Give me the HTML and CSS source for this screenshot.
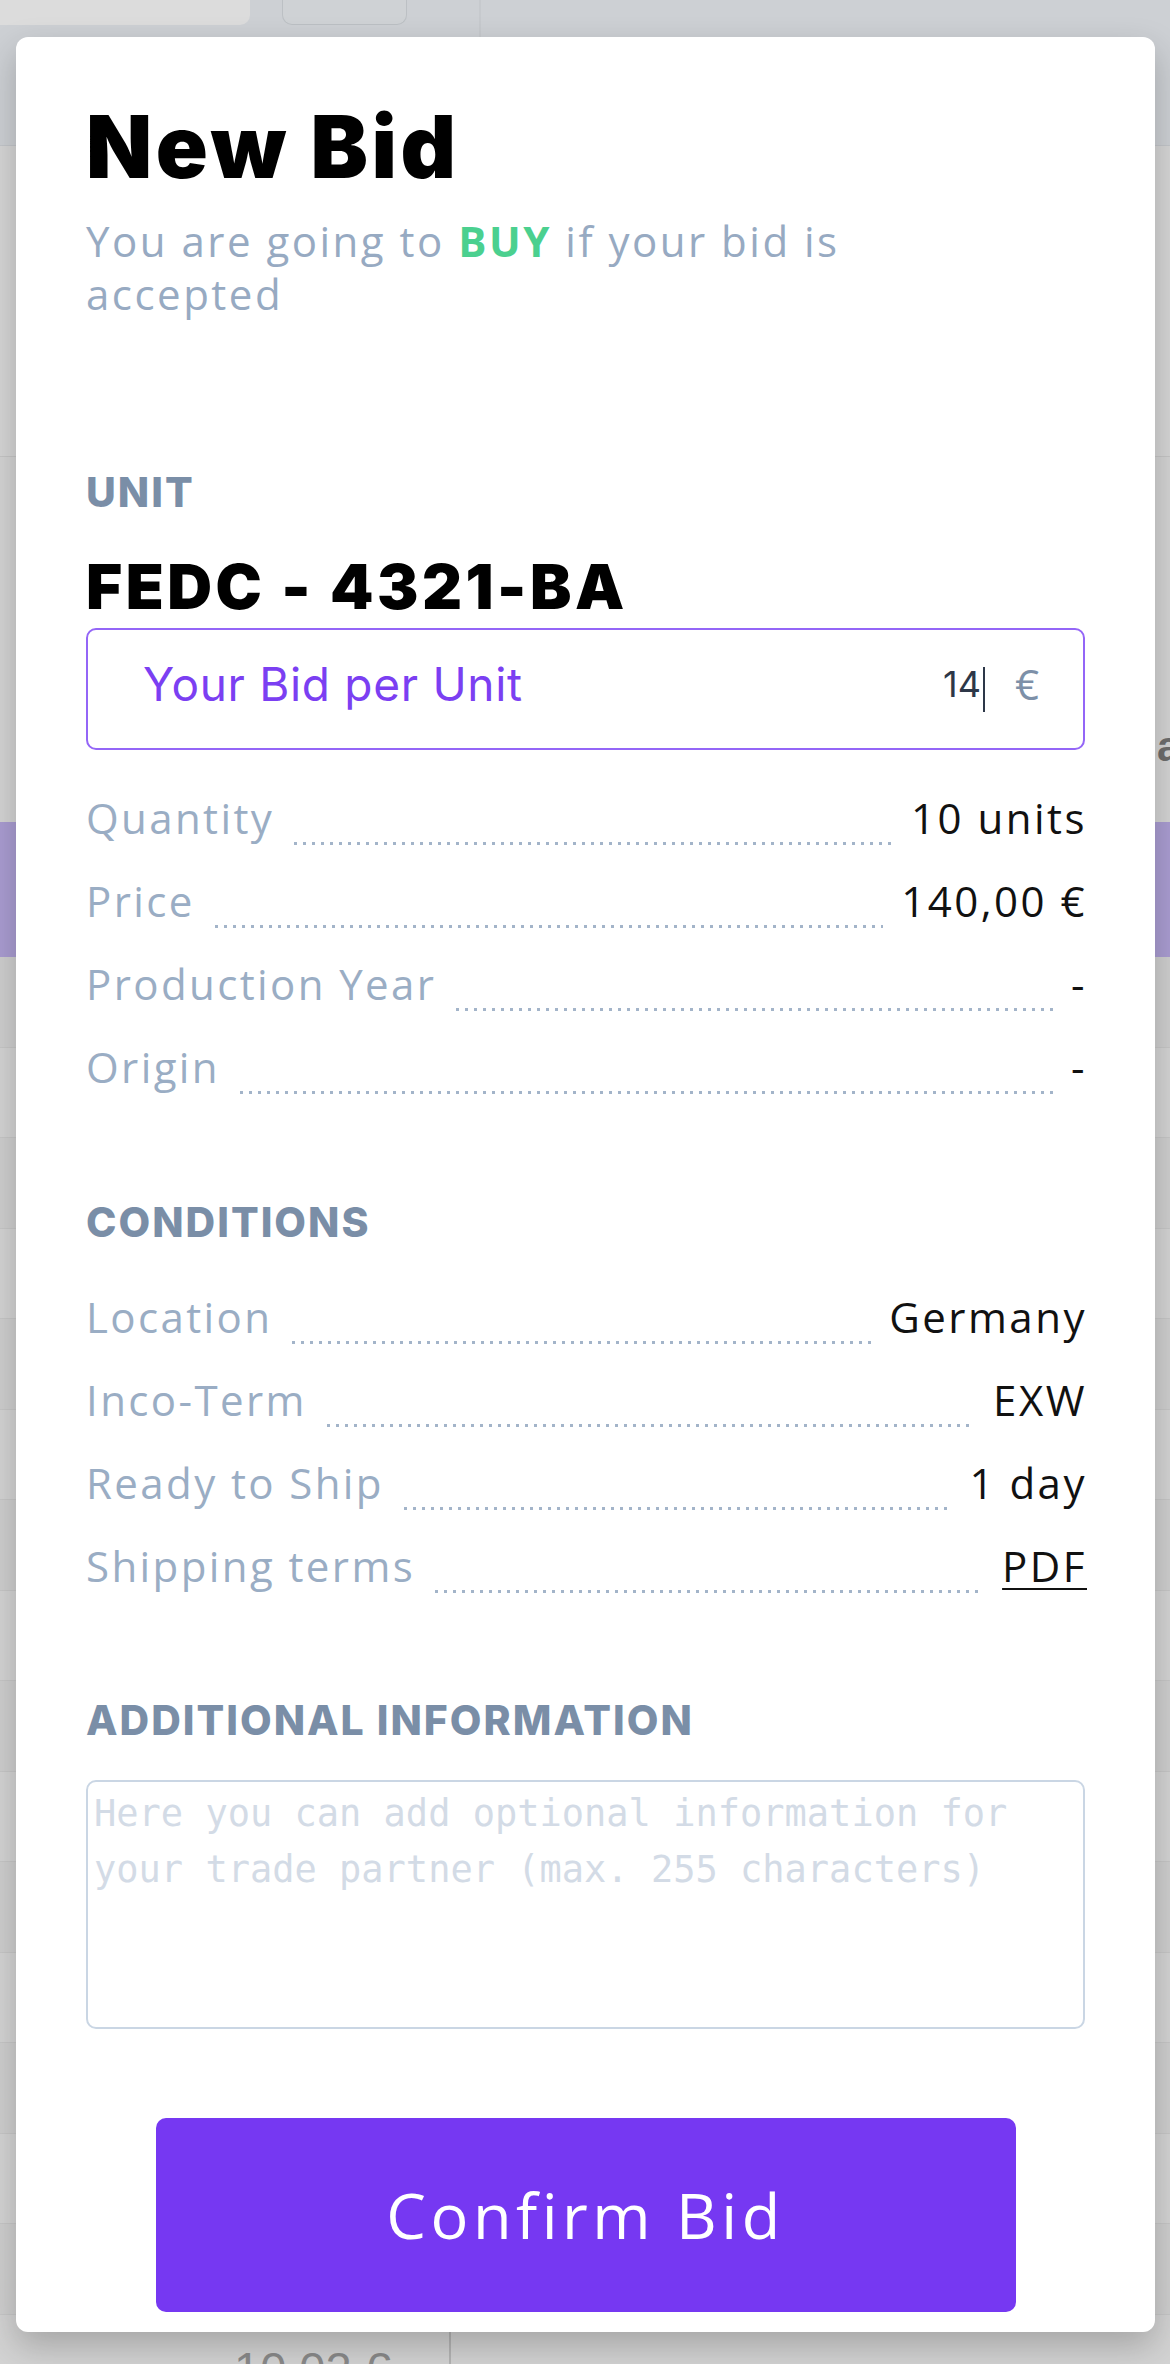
FILE: index.html
```html
<!DOCTYPE html>
<html lang="en">
<head>
<meta charset="utf-8">
<title>New Bid</title>
<link rel="stylesheet" href="styles.css">
</head>
<body>
<div class="page">
  <div class="bg">
    <div class="bg-top">
      <div class="bg-pill"></div>
      <div class="bg-btn"></div>
      <div class="bg-divider"></div>
    </div>
    <div class="bg-band bg-b1"></div>
    <div class="bg-band bg-b2"><span class="bg-a">a</span></div>
    <div class="bg-band bg-purple"></div>
    <div class="bg-rows">
      <div class="bg-row"></div><div class="bg-row"></div><div class="bg-row"></div>
      <div class="bg-row"></div><div class="bg-row"></div><div class="bg-row"></div>
      <div class="bg-row"></div><div class="bg-row"></div><div class="bg-row"></div>
      <div class="bg-row"></div><div class="bg-row"></div><div class="bg-row"></div>
      <div class="bg-row"></div><div class="bg-row"></div><div class="bg-row"></div>
    </div>
    <div class="bg-foot">
      <span class="bg-price">10,02 €</span>
      <span class="bg-vline"></span>
    </div>
  </div>

  <div class="modal">
    <h1 class="title">New Bid</h1>
    <p class="subtitle">
      <span class="sub-line">You are going to <strong class="buy">BUY</strong> if your bid is</span>
      <span class="sub-line">accepted</span>
    </p>

    <h2 class="section-label label-unit">UNIT</h2>
    <div class="unit-code">FEDC - 4321-BA</div>

    <div class="bid-field">
      <span class="bid-label">Your Bid per Unit</span>
      <span class="bid-value">14</span>
      <span class="caret"></span>
      <span class="bid-cur">€</span>
    </div>

    <div class="rows rows-unit">
      <div class="row"><span class="row-label">Quantity</span><span class="leader"></span><span class="row-value">10 units</span></div>
      <div class="row"><span class="row-label">Price</span><span class="leader"></span><span class="row-value">140,00 €</span></div>
      <div class="row"><span class="row-label">Production Year</span><span class="leader"></span><span class="row-value">-</span></div>
      <div class="row"><span class="row-label">Origin</span><span class="leader"></span><span class="row-value">-</span></div>
    </div>

    <h2 class="section-label label-cond">CONDITIONS</h2>
    <div class="rows rows-cond">
      <div class="row"><span class="row-label">Location</span><span class="leader"></span><span class="row-value">Germany</span></div>
      <div class="row"><span class="row-label">Inco-Term</span><span class="leader"></span><span class="row-value">EXW</span></div>
      <div class="row"><span class="row-label">Ready to Ship</span><span class="leader"></span><span class="row-value">1 day</span></div>
      <div class="row"><span class="row-label">Shipping terms</span><span class="leader"></span><span class="row-value pdf">PDF</span></div>
    </div>

    <h2 class="section-label label-add">ADDITIONAL INFORMATION</h2>
    <textarea class="notes" placeholder="Here you can add optional information for your trade partner (max. 255 characters)"></textarea>

    <button class="confirm" type="button">Confirm Bid</button>
  </div>
</div>
</body>
</html>
```

FILE: styles.css
```css
html, body {
  margin: 0;
  padding: 0;
}
body {
  width: 1170px;
  height: 2364px;
  overflow: hidden;
  background: #d2d2d2;
  font-family: "Open Sans", "Liberation Sans", sans-serif;
}
.page {
  position: relative;
  width: 1170px;
  height: 2364px;
  overflow: hidden;
}

/* ---------- dimmed background page ---------- */
.bg {
  display: flex;
  flex-direction: column;
  width: 1170px;
  height: 2364px;
}
.bg-top {
  height: 146px;
  flex: none;
  background: #cdd0d4;
  border-bottom: 1px solid #c3c6ca;
  box-sizing: border-box;
  display: flex;
  align-items: flex-start;
}
.bg-pill {
  width: 250px;
  height: 25px;
  background: #dcdcdc;
  border-bottom-right-radius: 10px;
}
.bg-btn {
  width: 123px;
  height: 24px;
  margin-left: 32px;
  border: 1px solid #bcc0c4;
  border-top: none;
  border-bottom-left-radius: 10px;
  border-bottom-right-radius: 10px;
  background: #cfd2d5;
}
.bg-divider {
  width: 2px;
  height: 146px;
  margin-left: 72px;
  background: #c6c9cd;
}
.bg-band {
  flex: none;
  box-sizing: border-box;
}
.bg-b1 {
  height: 311px;
  background: #d6d6d6;
  border-bottom: 1px solid #c6c6c6;
}
.bg-b2 {
  height: 365px;
  background: #d4d4d4;
  padding: 268px 0 0 1157px;
  white-space: nowrap;
  overflow: hidden;
}
.bg-a {
  font: 700 42px/44px "Liberation Sans", sans-serif;
  color: #6e6e6e;
}
.bg-purple {
  height: 135px;
  background: #aa9dd2;
}
.bg-rows {
  display: flex;
  flex-direction: column;
  flex: none;
}
.bg-row {
  height: 90.5px;
  background: #cfcfcf;
  border-bottom: 1px solid #c7c7c7;
  box-sizing: border-box;
}
.bg-row:nth-child(even) {
  background: #d4d4d4;
}
.bg-foot {
  flex: 1;
  display: flex;
  align-items: flex-start;
  background: #d3d3d3;
}
.bg-price {
  margin: 30px 0 0 234px;
  font: 400 47px/1 "Liberation Sans", sans-serif;
  color: #8a8a8a;
}
.bg-vline {
  width: 2px;
  align-self: stretch;
  margin-left: 58px;
  background: #b4b4b4;
}

/* ---------- modal ---------- */
.modal {
  position: absolute;
  left: 16px;
  top: 37px;
  width: 1139px;
  box-sizing: border-box;
  padding: 67.6px 70px 20px;
  background: #ffffff;
  border-radius: 12px;
  box-shadow: 0 14px 34px rgba(0, 0, 0, 0.22);
  display: flex;
  flex-direction: column;
}
.title {
  margin: 0;
  font: 900 86px/85px "Inter", "Liberation Sans", sans-serif;
  letter-spacing: 3.6px;
  color: #000;
}
.subtitle {
  margin: 24.6px 0 0;
  font: 400 42px/53px "Open Sans", sans-serif;
  letter-spacing: 2.5px;
  color: #97aac2;
}
.sub-line {
  display: block;
  white-space: nowrap;
}
.buy {
  font-weight: 700;
  color: #4bd08f;
}
.section-label {
  margin: 0;
  font: 800 41px/41px "Inter", "Liberation Sans", sans-serif;
  letter-spacing: 2px;
  color: #7a8ea7;
}
.label-unit { margin-top: 151.4px; }
.label-cond { margin-top: 106.9px; }
.label-add { margin-top: 105.9px; }

.unit-code {
  margin-top: 43.8px;
  font: 900 62px/62px "Inter", "Liberation Sans", sans-serif;
  letter-spacing: 3.5px;
  color: #000;
}

.bid-field {
  margin-top: 9.6px;
  height: 122px;
  box-sizing: border-box;
  border: 2px solid #9466f7;
  border-radius: 10px;
  display: flex;
  align-items: center;
  padding: 0 44px 10px 55px;
}
.bid-label {
  flex: 1;
  font: 400 46px "Inter", sans-serif;
  letter-spacing: 0.7px;
  color: #7b3ff2;
}
.bid-value {
  font: 400 36px "Inter", sans-serif;
  color: #2d3748;
}
.caret {
  width: 2px;
  height: 45px;
  margin: 11px 0 0 2px;
  background: #2d3748;
}
.bid-cur {
  margin-left: 30px;
  font: 400 42px "Open Sans", sans-serif;
  color: #7d90a8;
}

.rows {
  display: flex;
  flex-direction: column;
  gap: 27px;
}
.rows-unit { margin-top: 39.7px; }
.rows-cond { margin-top: 46.1px; }
.row {
  display: flex;
  align-items: flex-end;
  height: 56px;
}
.row-label {
  font: 400 42px/56px "Open Sans", sans-serif;
  letter-spacing: 2.4px;
  color: #9aadc4;
  white-space: nowrap;
}
.leader {
  flex: 1;
  height: 3px;
  margin: 0 18px 1px 20px;
  background-image: linear-gradient(to right, #a3b4c9 3px, transparent 3px);
  background-size: 9px 3px;
  background-repeat: repeat-x;
}
.row-value {
  font: 400 42px/56px "Open Sans", sans-serif;
  letter-spacing: 2.5px;
  margin-right: -2px;
  color: #111;
  white-space: nowrap;
}
.pdf {
  text-decoration: underline;
  text-decoration-thickness: 2px;
  text-underline-offset: 6px;
}

.notes {
  margin-top: 39.4px;
  width: 100%;
  height: 249px;
  box-sizing: border-box;
  border: 2px solid #cad6e4;
  border-radius: 10px;
  padding: 4px 2px 4px 6px;
  font: 400 37px/56px "DejaVu Sans Mono", monospace;
  color: #333;
  resize: none;
  outline: none;
  background: #fff;
}
.notes::placeholder {
  color: #d3dbe6;
  opacity: 1;
}

.confirm {
  margin-top: 89px;
  align-self: center;
  width: 860px;
  height: 194px;
  border: none;
  border-radius: 10px;
  background: #7638f2;
  color: #fff;
  font: 400 63px "Open Sans", sans-serif;
  letter-spacing: 4.5px;
  padding: 0;
}
```
